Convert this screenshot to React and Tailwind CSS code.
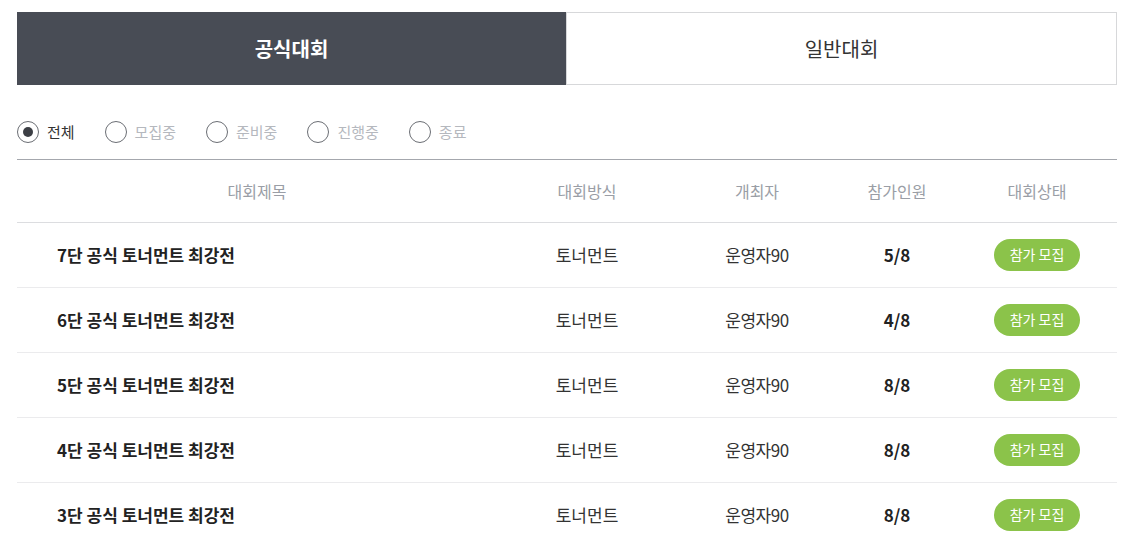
import { useState } from "react";

const filters = ["전체", "모집중", "준비중", "진행중", "종료"];

const rows = [
  { title: "7단 공식 토너먼트 최강전", type: "토너먼트", host: "운영자90", count: "5/8" },
  { title: "6단 공식 토너먼트 최강전", type: "토너먼트", host: "운영자90", count: "4/8" },
  { title: "5단 공식 토너먼트 최강전", type: "토너먼트", host: "운영자90", count: "8/8" },
  { title: "4단 공식 토너먼트 최강전", type: "토너먼트", host: "운영자90", count: "8/8" },
  { title: "3단 공식 토너먼트 최강전", type: "토너먼트", host: "운영자90", count: "8/8" },
];

const App = () => {
  const [tab, setTab] = useState(0);
  const [filter, setFilter] = useState(0);

  return (
    <main className="h-[544px] overflow-hidden bg-white pt-3 font-['Noto_Sans_CJK_KR','Noto_Sans',sans-serif] text-[#222]">
      <div className="ml-[17px] w-[1100px]">
        <div className="flex h-[73px]">
          {["공식대회", "일반대회"].map((label, i) => (
            <button
              key={label}
              onClick={() => setTab(i)}
              className={
                tab === i
                  ? "flex flex-1 items-center justify-center bg-[#484c55] text-[20px] font-bold text-white"
                  : "flex flex-1 items-center justify-center border border-[#d7d8da] bg-white text-[20px] text-[#333]"
              }
            >
              {label}
            </button>
          ))}
        </div>

        <div className="flex gap-[30px] border-b border-[#a4a7ad] pt-[36px] pb-[15px]">
          {filters.map((label, i) => (
            <label key={label} className="flex cursor-pointer items-center gap-[8px]" onClick={() => setFilter(i)}>
              <span className="flex h-[22px] w-[22px] items-center justify-center rounded-full border border-[#6b6e74]">
                {filter === i && <span className="h-[10px] w-[10px] rounded-full bg-[#3c3f45]" />}
              </span>
              <span className={filter === i ? "text-[15px] text-[#333]" : "text-[15px] text-[#b5b8be]"}>{label}</span>
            </label>
          ))}
        </div>

        <div className="grid h-[63px] grid-cols-[480px_180px_160px_120px_160px] items-center border-b border-[#dcdde0] text-center text-[16px] text-[#9a9ea6]">
          <div>대회제목</div>
          <div>대회방식</div>
          <div>개최자</div>
          <div>참가인원</div>
          <div>대회상태</div>
        </div>

        {rows.map((row) => (
          <div
            key={row.title}
            className="grid h-[65px] grid-cols-[480px_180px_160px_120px_160px] items-center border-b border-[#ebebed] text-center text-[17px]"
          >
            <div className="pl-[40px] text-left font-bold text-[#222]">{row.title}</div>
            <div className="text-[#333]">{row.type}</div>
            <div className="tracking-[-0.5px] text-[#333]">{row.host}</div>
            <div className="font-bold text-[#222]">{row.count}</div>
            <div className="flex justify-center">
              <span className="flex h-[32px] w-[86px] items-center justify-center rounded-full bg-[#8bc34a] text-[14px] text-white">
                참가 모집
              </span>
            </div>
          </div>
        ))}
      </div>
    </main>
  );
};

export default App;
